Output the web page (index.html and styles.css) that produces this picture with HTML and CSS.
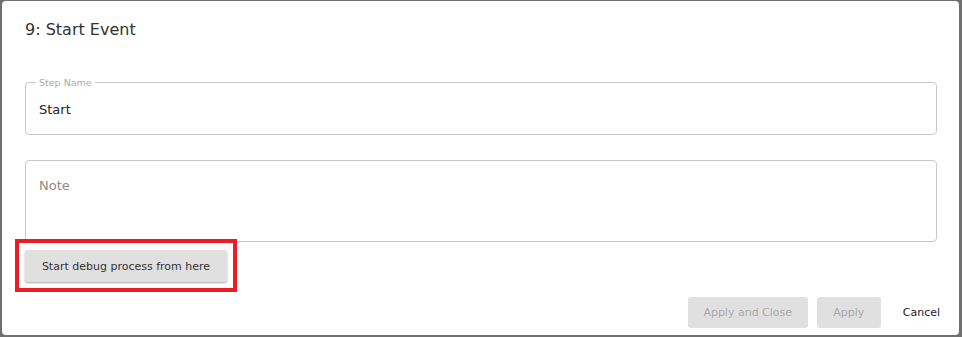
FILE: index.html
```html
<!DOCTYPE html>
<html>
<head>
    <meta charset="UTF-8">
    <link rel="stylesheet" href="styles.css">
</head>
<body>
    <div class="dialog">
        <div class="dialog-title">9: Start Event</div>
        <div class="dialog-body">
            <fieldset class="field">
                <legend>Step Name</legend>
                <div class="field-value">Start</div>
            </fieldset>
            <div class="note-box">
                <div class="placeholder">Note</div>
            </div>
            <div class="debug-row">
                <button class="debug-btn">Start debug process from here</button>
                <div class="highlight"></div>
            </div>
        </div>
        <div class="dialog-footer">
            <button class="footer-btn" disabled>Apply and Close</button>
            <button class="footer-btn apply" disabled>Apply</button>
            <button class="cancel-btn">Cancel</button>
        </div>
    </div>
</body>
</html>
```

FILE: styles.css
```css
html, body {
    height: 100%;
}
body {
    margin: 0;
    background-color: #707070;
    font-family: "DejaVu Sans", Verdana, sans-serif;
    color: #333;
    display: flex;
    padding: 1px 3px 2px 2px;
    box-sizing: border-box;
}
.dialog {
    flex: 1;
    background-color: #fff;
    border-radius: 4px;
    display: flex;
    flex-direction: column;
}
.dialog-title {
    padding: 19px 23px 0;
    font-size: 16px;
    color: #333;
    height: 57px;
}
.dialog-body {
    padding: 0 22px 0 23px;
    display: flex;
    flex-direction: column;
}
.field {
    margin: 0;
    padding: 0 13px;
    border: 1px solid #c8c8c8;
    border-radius: 4px;
    height: 58px;
    box-sizing: border-box;
}
.field legend {
    font-size: 9.5px;
    color: #aaa;
    padding: 0 3px;
    margin-left: -3px;
}
.field-value {
    font-size: 13px;
    color: #222;
    padding-top: 14px;
}
.note-box {
    margin-top: 25px;
    border: 1px solid #c8c8c8;
    border-radius: 4px;
    height: 82px;
    box-sizing: border-box;
    padding: 17px 13px 0;
}
.placeholder {
    font-size: 13px;
    color: #8f8a86;
}
.debug-row {
    position: relative;
    margin-top: 8px;
    display: flex;
}
.debug-btn {
    background-color: #e0e0e0;
    border: none;
    border-radius: 3px;
    box-shadow: 0 1px 2px rgba(0, 0, 0, 0.35);
    font-family: "DejaVu Sans", Verdana, sans-serif;
    font-size: 11px;
    color: #333;
    width: 202px;
    height: 32px;
    padding: 0;
}
.highlight {
    position: absolute;
    left: -10px;
    top: -11px;
    width: 222px;
    height: 53px;
    border: 4px solid #ed1c24;
    box-sizing: border-box;
}
.dialog-footer {
    display: flex;
    justify-content: flex-end;
    align-items: center;
    gap: 9px;
    padding: 15px 19px 0 0;
}
.footer-btn {
    background-color: #e0e0e0;
    border: none;
    border-radius: 3px;
    font-family: "DejaVu Sans", Verdana, sans-serif;
    font-size: 11px;
    color: #aaa;
    height: 31px;
    width: 120px;
    padding: 0;
}
.footer-btn.apply {
    width: 64px;
}
.cancel-btn {
    background: transparent;
    border: none;
    font-family: "DejaVu Sans", Verdana, sans-serif;
    font-size: 11px;
    color: #222;
    padding: 0;
    margin-left: 13px;
    cursor: pointer;
}
```
